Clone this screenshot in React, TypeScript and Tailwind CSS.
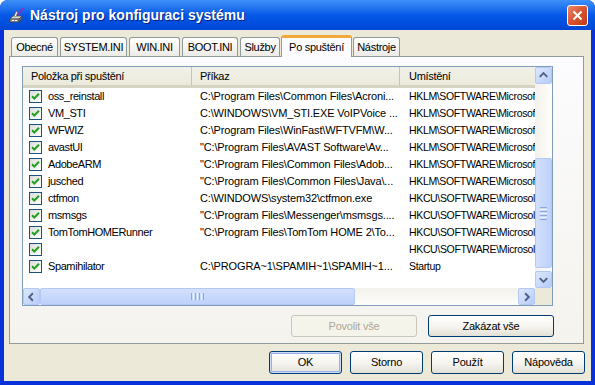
const rows: [string, string, string][] = [
  ["oss_reinstall", "C:\\Program Files\\Common Files\\Acroni...", "HKLM\\SOFTWARE\\Microsof"],
  ["VM_STI", "C:\\WINDOWS\\VM_STI.EXE VoIPVoice ...", "HKLM\\SOFTWARE\\Microsof"],
  ["WFWIZ", "C:\\Program Files\\WinFast\\WFTVFM\\W...", "HKLM\\SOFTWARE\\Microsof"],
  ["avastUI", "\"C:\\Program Files\\AVAST Software\\Av...", "HKLM\\SOFTWARE\\Microsof"],
  ["AdobeARM", "\"C:\\Program Files\\Common Files\\Adob...", "HKLM\\SOFTWARE\\Microsof"],
  ["jusched", "\"C:\\Program Files\\Common Files\\Java\\...", "HKLM\\SOFTWARE\\Microsof"],
  ["ctfmon", "C:\\WINDOWS\\system32\\ctfmon.exe", "HKCU\\SOFTWARE\\Microsol"],
  ["msmsgs", "\"C:\\Program Files\\Messenger\\msmsgs....", "HKCU\\SOFTWARE\\Microsol"],
  ["TomTomHOMERunner", "\"C:\\Program Files\\TomTom HOME 2\\To...", "HKCU\\SOFTWARE\\Microsol"],
  ["", "", "HKCU\\SOFTWARE\\Microsol"],
  ["Spamihilator", "C:\\PROGRA~1\\SPAMIH~1\\SPAMIH~1...", "Startup"],
];

const tabs = [
  { label: "Obecné", w: "w-[47px]", ml: "ml-[2px]" },
  { label: "SYSTEM.INI", w: "w-[67px]", ml: "ml-[2px]" },
  { label: "WIN.INI", w: "w-[51px]", ml: "ml-[2px]" },
  { label: "BOOT.INI", w: "w-[56px]", ml: "ml-[2px]" },
  { label: "Služby", w: "w-[40px]", ml: "ml-[2px]" },
];

function Arrow({ dir }: { dir: "up" | "down" | "left" | "right" }) {
  const d = {
    up: "M4 9 L8 5 L12 9",
    down: "M4 6 L8 10 L12 6",
    left: "M9.5 4 L5.5 8 L9.5 12",
    right: "M6.5 4 L10.5 8 L6.5 12",
  }[dir];
  return (
    <svg width="16" height="16" viewBox="0 0 16 16">
      <path d={d} fill="none" stroke="#4D6185" strokeWidth="2" />
    </svg>
  );
}

function ScrollBtn({ dir }: { dir: "up" | "down" | "left" | "right" }) {
  return (
    <div className="w-[17px] h-[17px] shrink-0 rounded-[2px] border border-[#B4C8F6] bg-gradient-to-br from-[#DCE7FD] to-[#B7CCF8] flex items-center justify-center">
      <Arrow dir={dir} />
    </div>
  );
}

function Check() {
  return (
    <div className="w-[13px] h-[13px] shrink-0 border border-[#1C5180] bg-gradient-to-br from-[#DCDCD7] to-white flex items-center justify-center">
      <svg width="11" height="11" viewBox="0 0 11 11">
        <path d="M2 5.2 L4.3 7.5 L9 2.8" fill="none" stroke="#21A121" strokeWidth="2" />
      </svg>
    </div>
  );
}

function Button({ label, w, h, disabled, def }: { label: string; w: string; h: string; disabled?: boolean; def?: boolean }) {
  const base = `${w} ${h} rounded-[3px] border flex items-center justify-center text-[11px] tracking-[-0.2px]`;
  if (disabled) {
    return <div className={`${base} border-[#C9C7BA] bg-[#F5F4EA] text-[#ACA899]`}>{label}</div>;
  }
  return (
    <div
      className={`${base} border-[#003C74] bg-gradient-to-b from-white via-[#F6F5F0] to-[#E3E1D6] text-black ${
        def ? "shadow-[inset_0_0_0_1px_#CEDDF7,inset_0_0_0_2px_#92B0EC]" : ""
      }`}
    >
      {label}
    </div>
  );
}

export default function App() {
  return (
    <div className="w-[595px] h-[385px] flex flex-col bg-[#0831D9] rounded-t-[8px] overflow-hidden font-['Liberation_Sans',Tahoma,sans-serif] text-[11px] text-black">
      {/* title bar */}
      <div className="h-[30px] shrink-0 flex items-center pl-[9px] pr-[7px] bg-gradient-to-b from-[#3D8FF8] via-[#0558E7] to-[#0046D5]">
        <svg width="17" height="17" viewBox="0 0 17 17" className="shrink-0">
          <path d="M1 12 L4 9 L13 9 L10 12 Z" fill="#D8D8D8" stroke="#555" strokeWidth="0.8" />
          <path d="M1 12 L10 12 L10 15 L1 15 Z" fill="#9A9A9A" stroke="#444" strokeWidth="0.8" />
          <path d="M10 12 L13 9 L13 12 L10 15 Z" fill="#6E6E6E" stroke="#444" strokeWidth="0.8" />
          <rect x="3" y="13" width="2" height="1" fill="#fff" />
          <rect x="6" y="13" width="2" height="1" fill="#fff" />
          <path d="M9 8 L14 1" stroke="#8B2FC9" strokeWidth="2" />
          <path d="M5 9 L7 4 L9 5 L7.5 9" fill="#F0F0F0" stroke="#444" strokeWidth="0.7" />
        </svg>
        <span className="ml-[4px] text-white font-bold text-[14px] font-['Liberation_Sans',sans-serif] [text-shadow:1px_1px_0_#0A1E80]">
          Nástroj pro konfiguraci systému
        </span>
        <div className="ml-auto w-[21px] h-[21px] rounded-[3px] border border-white bg-gradient-to-br from-[#E9886A] via-[#D8532E] to-[#C03B14] flex items-center justify-center">
          <svg width="11" height="11" viewBox="0 0 11 11">
            <path d="M1.5 1.5 L9.5 9.5 M9.5 1.5 L1.5 9.5" stroke="white" strokeWidth="2" />
          </svg>
        </div>
      </div>

      {/* body */}
      <div className="flex-1 flex flex-col mx-[4px] mb-[4px] bg-[#ECE9D8] pt-[5px] pl-[5px] pr-[6px] pb-[6px]">
        {/* tabs */}
        <div className="h-[21px] flex items-start tracking-[-0.3px]">
          {tabs.map((t) => (
            <div
              key={t.label}
              className={`${t.w} ${t.ml} mt-[2px] h-[19px] rounded-t-[3px] border border-b-0 border-[#919B9C] bg-gradient-to-b from-white to-[#ECEBE6] flex items-center justify-center`}
            >
              {t.label}
            </div>
          ))}
          <div className="relative z-10 w-[71px] ml-[1px] h-[22px] rounded-t-[3px] border border-b-0 border-[#919B9C] border-t-[3px] border-t-[#F2A93A] bg-[#FCFCFE] flex items-center justify-center">
            Po spuštění
          </div>
          <div className="w-[47px] ml-[1px] mt-[2px] h-[19px] rounded-t-[3px] border border-b-0 border-[#919B9C] bg-gradient-to-b from-white to-[#ECEBE6] flex items-center justify-center">
            Nástroje
          </div>
        </div>

        {/* panel */}
        <div className="h-[288px] mr-[1px] border border-[#919B9C] bg-gradient-to-b from-[#FCFCFE] to-[#F4F3EE] pl-[12px] pt-[9px] flex flex-col">
          {/* listview */}
          <div className="w-[531px] h-[240px] border border-[#7F9DB9] bg-white flex">
            <div className="w-[512px] flex flex-col">
              <div className="h-[21px] shrink-0 flex bg-gradient-to-b from-[#F2F1EA] to-[#EBEADB] border-b-[3px] border-[#D6D2C2] tracking-[-0.3px]">
                <div className="w-[169px] shrink-0 flex items-center pl-[8px] border-r border-[#C7C5B2]">Položka při spuštění</div>
                <div className="w-[208px] shrink-0 flex items-center pl-[8px] border-r border-[#C7C5B2]">Příkaz</div>
                <div className="flex-1 flex items-center pl-[9px]">Umístění</div>
              </div>
              <div className="flex-1 overflow-hidden">
                {rows.map(([name, cmd, loc], i) => (
                  <div key={i} className="h-[17px] flex items-center whitespace-nowrap">
                    <div className="w-[169px] shrink-0 flex items-center pl-[6px]">
                      <Check />
                      <span className="ml-[6px] tracking-[-0.4px]">{name}</span>
                    </div>
                    <div className="w-[208px] shrink-0 pl-[8px] tracking-[-0.15px]">{cmd}</div>
                    <div className="flex-1 pl-[9px] text-[10.5px] tracking-[-0.35px]">{loc}</div>
                  </div>
                ))}
              </div>
              {/* horizontal scrollbar */}
              <div className="h-[17px] shrink-0 flex bg-gradient-to-b from-[#F3F1EA] to-[#FEFEFB]">
                <ScrollBtn dir="left" />
                <div className="w-[315px] h-[17px] rounded-[2px] border border-[#B4C8F6] bg-gradient-to-b from-[#D3E0FD] to-[#BED1FA] flex items-center justify-center gap-[1px]">
                  <div className="w-[1px] h-[7px] bg-[#8DA6DE]" />
                  <div className="w-[1px] h-[7px] bg-[#EEF3FE]" />
                  <div className="w-[1px] h-[7px] bg-[#8DA6DE]" />
                  <div className="w-[1px] h-[7px] bg-[#EEF3FE]" />
                  <div className="w-[1px] h-[7px] bg-[#8DA6DE]" />
                  <div className="w-[1px] h-[7px] bg-[#EEF3FE]" />
                  <div className="w-[1px] h-[7px] bg-[#8DA6DE]" />
                </div>
                <div className="flex-1" />
                <ScrollBtn dir="right" />
              </div>
            </div>
            {/* vertical scrollbar */}
            <div className="w-[17px] flex flex-col">
              <div className="h-[221px] flex flex-col bg-gradient-to-r from-[#F3F1EA] to-[#FEFEFB]">
                <ScrollBtn dir="up" />
                <div className="flex-1">
                  <div className="mt-[74px] h-[110px] w-[17px] rounded-[2px] border border-[#B4C8F6] bg-gradient-to-r from-[#D3E0FD] to-[#BED1FA] flex flex-col items-center justify-center gap-[1px]">
                    <div className="h-[1px] w-[7px] bg-[#8DA6DE]" />
                    <div className="h-[1px] w-[7px] bg-[#EEF3FE]" />
                    <div className="h-[1px] w-[7px] bg-[#8DA6DE]" />
                    <div className="h-[1px] w-[7px] bg-[#EEF3FE]" />
                    <div className="h-[1px] w-[7px] bg-[#8DA6DE]" />
                    <div className="h-[1px] w-[7px] bg-[#EEF3FE]" />
                    <div className="h-[1px] w-[7px] bg-[#8DA6DE]" />
                  </div>
                </div>
                <ScrollBtn dir="down" />
              </div>
              <div className="flex-1 bg-[#ECE9D8]" />
            </div>
          </div>

          {/* enable / disable all */}
          <div className="w-[532px] mt-[9px] flex justify-end gap-[11px]">
            <Button label="Povolit vše" w="w-[126px]" h="h-[22px]" disabled />
            <Button label="Zakázat vše" w="w-[126px]" h="h-[22px]" />
          </div>
        </div>

        {/* dialog buttons */}
        <div className="mt-[7px] flex justify-end gap-[8px]">
          <Button label="OK" w="w-[73px]" h="h-[23px]" def />
          <Button label="Storno" w="w-[73px]" h="h-[23px]" />
          <Button label="Použít" w="w-[73px]" h="h-[23px]" />
          <Button label="Nápověda" w="w-[73px]" h="h-[23px]" />
        </div>
      </div>
    </div>
  );
}
